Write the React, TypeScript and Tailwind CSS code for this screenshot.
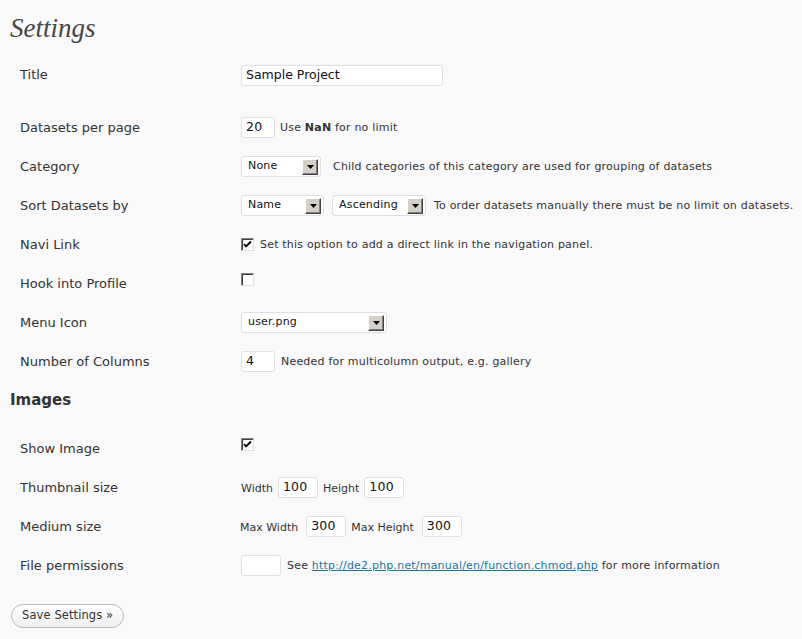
import type { ReactNode } from 'react';

const font = { fontFamily: '"DejaVu Sans", Verdana, sans-serif' };

function TextInput({ value, width }: { value: string; width: string }) {
  return (
    <div
      className={`${width} h-[21px] flex items-center bg-white border border-[#dfdfdf] rounded-[3px] px-[4px] text-[12.5px] text-[#111] leading-none`}
    >
      {value}
    </div>
  );
}

function Select({ value, width }: { value: string; width: string }) {
  return (
    <div
      className={`${width} h-[21px] flex items-center justify-between bg-white border border-[#dfdfdf] rounded-[3px] pl-[6px] pr-[2px] text-[11px] tracking-[0.2px] text-[#111]`}
    >
      <span>{value}</span>
      <span className="w-[16px] h-[16px] flex items-center justify-center bg-[#d4d0c8] border border-t-white border-l-white border-r-[#404040] border-b-[#404040] shadow-[inset_-1px_-1px_0_#808080]">
        <svg width="7" height="4" viewBox="0 0 7 4">
          <path d="M0 0h7L3.5 4z" fill="#000" />
        </svg>
      </span>
    </div>
  );
}

function Checkbox({ checked, raised }: { checked?: boolean; raised?: boolean }) {
  return (
    <span
      className={`w-[13px] h-[13px] ${raised ? 'mb-[9px]' : ''} flex items-center justify-center bg-white border border-t-[#808080] border-l-[#808080] border-r-[#e0e0e0] border-b-[#e0e0e0] shadow-[inset_1px_1px_0_#404040]`}
    >
      {checked && (
        <svg width="9" height="9" viewBox="0 0 9 9">
          <path d="M1 4l2 2.5L8 1.5" stroke="#000" strokeWidth="1.8" fill="none" />
        </svg>
      )}
    </span>
  );
}

function Row({ label, children, gap = 'gap-[5px]' }: { label: string; children: ReactNode; gap?: string }) {
  return (
    <div className="flex items-center h-[39px]">
      <div className="w-[241px] shrink-0 pl-[20px] text-[13px] text-[#333]">{label}</div>
      <div className={`flex items-center ${gap} text-[11px] tracking-[0.2px] text-[#333] whitespace-nowrap`}>
        {children}
      </div>
    </div>
  );
}

export default function App() {
  return (
    <div className="w-[802px] h-[639px] bg-[#f9f9f9] overflow-hidden" style={font}>
      <h2
        className="pl-[10px] pt-[12px] h-[52px] text-[27px] italic text-[#464646] leading-[32px]"
        style={{ fontFamily: '"Liberation Serif", Georgia, serif' }}
      >
        Settings
      </h2>

      <div className="flex items-center h-[46px]">
        <div className="w-[241px] shrink-0 pl-[20px] text-[13px] text-[#333]">Title</div>
        <TextInput value="Sample Project" width="w-[202px]" />
      </div>

      <div className="mt-[10px]">
        <Row label="Datasets per page">
          <TextInput value="20" width="w-[34px]" />
          <span className="mt-[2px]">
            Use <span className="font-semibold">NaN</span> for no limit
          </span>
        </Row>
        <Row label="Category" gap="gap-[12px]">
          <Select value="None" width="w-[80px]" />
          <span className="mt-[1px]">Child categories of this category are used for grouping of datasets</span>
        </Row>
        <Row label="Sort Datasets by" gap="gap-[8px]">
          <Select value="Name" width="w-[83px]" />
          <Select value="Ascending" width="w-[94px]" />
          <span className="mt-[1px]">To order datasets manually there must be no limit on datasets.</span>
        </Row>
        <Row label="Navi Link" gap="gap-[6px]">
          <Checkbox checked />
          <span className="mt-[1px]">Set this option to add a direct link in the navigation panel.</span>
        </Row>
        <Row label="Hook into Profile">
          <Checkbox raised />
        </Row>
        <Row label="Menu Icon">
          <Select value="user.png" width="w-[146px]" />
        </Row>
        <Row label="Number of Columns" gap="gap-[6px]">
          <TextInput value="4" width="w-[34px]" />
          <span className="mt-[2px]">Needed for multicolumn output, e.g. gallery</span>
        </Row>
      </div>

      <h3 className="pl-[10px] h-[48px] pt-[8px] text-[15px] font-bold text-[#333]">Images</h3>

      <div>
        <Row label="Show Image">
          <Checkbox checked raised />
        </Row>
        <Row label="Thumbnail size">
          <span className="mt-[4px] tracking-normal">Width</span>
          <TextInput value="100" width="w-[40px]" />
          <span className="mt-[4px] tracking-normal">Height</span>
          <TextInput value="100" width="w-[40px]" />
        </Row>
        <Row label="Medium size">
          <span className="mt-[4px] -ml-[1px] mr-[3px] tracking-normal">Max Width</span>
          <TextInput value="300" width="w-[40px]" />
          <span className="mt-[4px] mr-[3px] tracking-normal">Max Height</span>
          <TextInput value="300" width="w-[40px]" />
        </Row>
        <Row label="File permissions" gap="gap-[6px]">
          <TextInput value="" width="w-[40px]" />
          <span className="mt-[2px]">
            See{' '}
            <a href="#" className="text-[#21759b] underline">
              http://de2.php.net/manual/en/function.chmod.php
            </a>{' '}
            for more information
          </span>
        </Row>
      </div>

      <div className="pl-[11px] mt-[17px]">
        <button className="h-[24px] px-[10px] rounded-full border border-[#bbb] bg-gradient-to-b from-white to-[#eee] text-[11.5px] tracking-[0.1px] text-[#333]">
          Save Settings »
        </button>
      </div>
    </div>
  );
}
